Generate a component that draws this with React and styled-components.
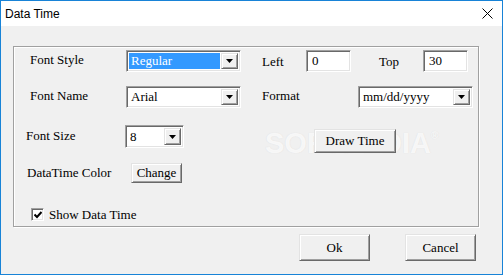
import React from "react";
import styled, { createGlobalStyle } from "styled-components";

const GlobalStyle = createGlobalStyle`
  html, body {
    margin: 0;
    padding: 0;
    background: #f0f0f0;
  }
`;

const Window = styled.div`
  width: 503px;
  height: 275px;
  box-sizing: border-box;
  border: 1px solid #1883d7;
  background: #f0f0f0;
  display: flex;
  flex-direction: column;
  overflow: hidden;
  font-family: "Liberation Serif", "Times New Roman", serif;
  font-size: 13px;
  color: #000;
`;

const TitleBar = styled.div`
  height: 25px;
  background: #fff;
  display: flex;
  align-items: center;
  justify-content: space-between;
  padding: 0 9px 0 4px;
  font-family: "Liberation Sans", Arial, sans-serif;
  font-size: 12px;
`;

const Body = styled.div`
  flex: 1;
  padding: 20px 0 0 12px;
  display: flex;
  flex-direction: column;
`;

const GroupBox = styled.div`
  position: relative;
  width: 466px;
  height: 181px;
  box-sizing: border-box;
  border: 1px solid #a0a0a0;
  box-shadow: inset 1px 1px 0 #fff, 1px 1px 0 #fff;
  padding-top: 3px;
  display: flex;
  flex-direction: column;
`;

const Row = styled.div`
  display: flex;
  align-items: flex-start;
  height: ${(p) => p.h}px;
  flex-shrink: 0;
`;

const Label = styled.span`
  display: block;
  width: ${(p) => p.w}px;
  margin-left: ${(p) => p.dx || 0}px;
  margin-top: ${(p) => p.dy || 0}px;
  line-height: 15px;
  white-space: nowrap;
`;

const sunken = `
  box-sizing: border-box;
  border: 1px solid;
  border-color: #a0a0a0 #fff #fff #a0a0a0;
  box-shadow: inset 1px 1px 0 #696969, inset -1px -1px 0 #e3e3e3;
  background: #fff;
`;

const raised = `
  box-sizing: border-box;
  border: 1px solid;
  border-color: #e3e3e3 #696969 #696969 #e3e3e3;
  box-shadow: inset 1px 1px 0 #fff, inset -1px -1px 0 #a0a0a0;
  background: #f0f0f0;
`;

const Combo = styled.div`
  ${sunken}
  width: ${(p) => p.w}px;
  height: ${(p) => p.h || 22}px;
  margin-left: ${(p) => p.dx || 0}px;
  padding: 2px;
  display: flex;
`;

const ComboText = styled.div`
  flex: 1;
  display: flex;
  align-items: center;
  padding-left: 2px;
  margin-right: 1px;
  background: ${(p) => (p.selected ? "#3399ff" : "#fff")};
  color: ${(p) => (p.selected ? "#fff" : "#000")};
`;

const ArrowButton = styled.div`
  ${raised}
  width: 17px;
  display: flex;
  align-items: center;
  justify-content: center;
`;

const TextInput = styled.div`
  ${sunken}
  width: ${(p) => p.w}px;
  height: 22px;
  padding: 2px 0 0 5px;
  line-height: 15px;
`;

const Button = styled.div`
  ${raised}
  position: relative;
  z-index: 1;
  width: ${(p) => p.w}px;
  height: ${(p) => p.h}px;
  margin-left: ${(p) => p.dx || 0}px;
  margin-top: ${(p) => p.dy || 0}px;
  display: flex;
  align-items: center;
  justify-content: center;
  white-space: nowrap;
`;

const CheckBox = styled.div`
  ${sunken}
  width: 13px;
  height: 13px;
  margin-left: ${(p) => p.dx || 0}px;
  margin-right: 5px;
  display: flex;
  align-items: center;
  justify-content: center;
`;

const ButtonRow = styled.div`
  display: flex;
  justify-content: flex-end;
  gap: 35px;
  margin-top: 7px;
  padding-right: 26px;
`;

const Watermark = styled.div`
  position: absolute;
  z-index: 0;
  left: 251px;
  top: 80px;
  font-family: "Liberation Sans", Arial, sans-serif;
  font-weight: bold;
  font-size: 29px;
  color: rgba(255, 255, 255, 0.8);
  text-shadow: 0 0 1px rgba(170, 170, 170, 0.3);
  pointer-events: none;
  sup {
    font-size: 10px;
    vertical-align: 14px;
  }
`;

const Arrow = () => (
  <svg width="7" height="4" viewBox="0 0 7 4">
    <path d="M0 0 H7 L3.5 4 Z" fill="#000" />
  </svg>
);

const ComboBox = ({ w, h, dx, value, selected }) => (
  <Combo w={w} h={h} dx={dx}>
    <ComboText selected={selected}>{value}</ComboText>
    <ArrowButton>
      <Arrow />
    </ArrowButton>
  </Combo>
);

const App = () => (
  <>
    <GlobalStyle />
    <Window>
      <TitleBar>
        <span>Data Time</span>
        <svg width="11" height="11" viewBox="0 0 11 11">
          <path d="M0.5 0.5 L10.5 10.5 M10.5 0.5 L0.5 10.5" stroke="#000" strokeWidth="1" />
        </svg>
      </TitleBar>
      <Body>
        <GroupBox>
          <Watermark>
            SOFTPEDIA<sup>®</sup>
          </Watermark>
          <Row h={36}>
            <Label w={96} dx={16} dy={2}>Font Style</Label>
            <ComboBox w={115} value="Regular" selected />
            <Label w={44} dx={21} dy={4}>Left</Label>
            <TextInput w={45}>0</TextInput>
            <Label w={44} dx={28} dy={4}>Top</Label>
            <TextInput w={45}>30</TextInput>
          </Row>
          <Row h={39}>
            <Label w={96} dx={16} dy={2}>Font Name</Label>
            <ComboBox w={115} value="Arial" />
            <Label w={96} dx={21} dy={2}>Format</Label>
            <ComboBox w={115} value="mm/dd/yyyy" />
          </Row>
          <Row h={38}>
            <Label w={99} dx={12} dy={3}>Font Size</Label>
            <ComboBox w={59} h={23} value="8" />
            <Button w={82} h={24} dx={130} dy={4}>Draw Time</Button>
          </Row>
          <Row h={45}>
            <Label w={104} dx={13} dy={2}>DataTime Color</Label>
            <Button w={51} h={20}>Change</Button>
          </Row>
          <Row h={16}>
            <CheckBox dx={17}>
              <svg width="8" height="8" viewBox="0 0 8 8">
                <path d="M0.5 3.5 L3 6 L7.5 1" fill="none" stroke="#000" strokeWidth="2" />
              </svg>
            </CheckBox>
            <Label w={120} dy={-1}>Show Data Time</Label>
          </Row>
        </GroupBox>
        <ButtonRow>
          <Button w={71} h={27}>Ok</Button>
          <Button w={71} h={27}>Cancel</Button>
        </ButtonRow>
      </Body>
    </Window>
  </>
);

export default App;
